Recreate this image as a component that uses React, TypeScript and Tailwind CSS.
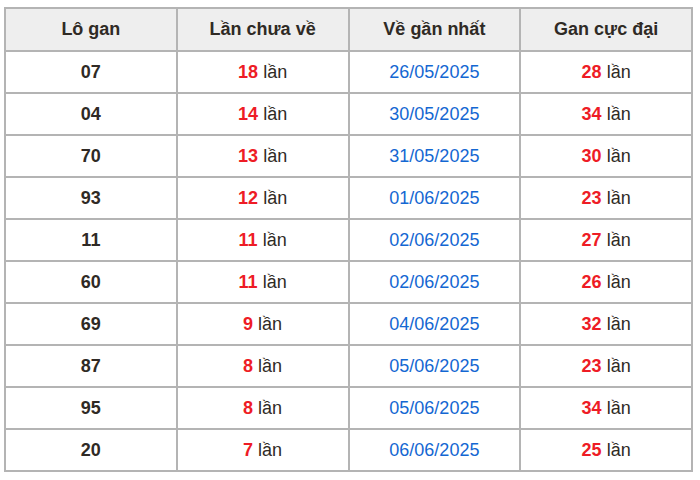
const rows: [string, number, string, number][] = [
  ["07", 18, "26/05/2025", 28],
  ["04", 14, "30/05/2025", 34],
  ["70", 13, "31/05/2025", 30],
  ["93", 12, "01/06/2025", 23],
  ["11", 11, "02/06/2025", 27],
  ["60", 11, "02/06/2025", 26],
  ["69", 9, "04/06/2025", 32],
  ["87", 8, "05/06/2025", 23],
  ["95", 8, "05/06/2025", 34],
  ["20", 7, "06/06/2025", 25],
];

const headers = ["Lô gan", "Lần chưa về", "Về gần nhất", "Gan cực đại"];

export default function App() {
  return (
    <div className="w-[700px] h-[480px] bg-white pt-[7px] pl-[4px] font-['Liberation_Sans',Arial,sans-serif] text-[18px] text-[#2f2a25]">
      <table className="w-[689px] table-fixed border-collapse">
        <thead>
          <tr className="h-[43px] bg-[#eeeeee]">
            {headers.map((h) => (
              <th key={h} className="border-2 border-[#b4b4b4] font-bold text-center">
                {h}
              </th>
            ))}
          </tr>
        </thead>
        <tbody>
          {rows.map(([lo, chua, date, max], i) => (
            <tr key={i} className="h-[42px]">
              <td className="border-2 border-[#b4b4b4] text-center font-bold">{lo}</td>
              <td className="border-2 border-[#b4b4b4] text-center">
                <span className="font-bold text-[#ee1c25]">{chua}</span> lần
              </td>
              <td className="border-2 border-[#b4b4b4] text-center text-[#1467d2]">{date}</td>
              <td className="border-2 border-[#b4b4b4] text-center">
                <span className="font-bold text-[#ee1c25]">{max}</span> lần
              </td>
            </tr>
          ))}
        </tbody>
      </table>
    </div>
  );
}
